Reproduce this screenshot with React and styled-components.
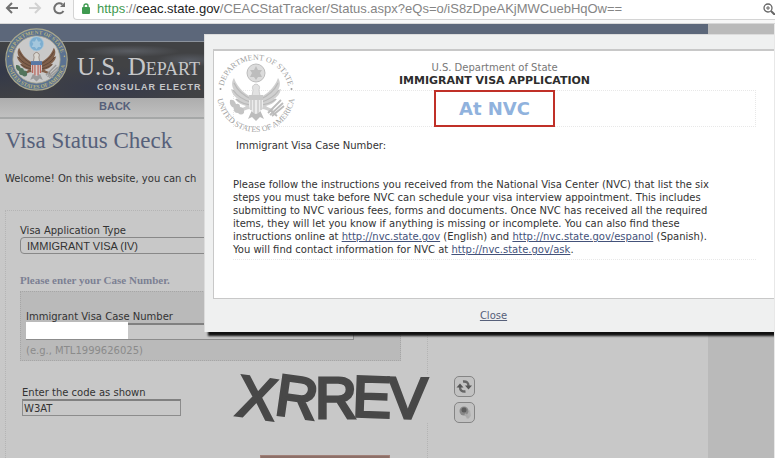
import React from "react";
import styled, { createGlobalStyle } from "styled-components";

const sans = `"DejaVu Sans", Verdana, sans-serif`;
const arial = `"Liberation Sans", Arial, sans-serif`;
const serif = `"Liberation Serif", "Times New Roman", serif`;

const GlobalStyle = createGlobalStyle`
  *, *::before, *::after { box-sizing: border-box; }
  body { margin: 0; background: #e8e8e8; font: 10px/13px ${sans}; color: #333; }
`;

const Window = styled.div`
  height: 100vh;
  overflow: hidden;
  display: flex;
  flex-direction: column;
`;

const BrowserBar = styled.div`
  flex: none;
  height: 24px;
  display: flex;
  align-items: flex-start;
  background: #f7f7f7;
  border-bottom: 1px solid #d8d8d8;
`;

const BarButton = styled.button`
  flex: none;
  width: 24px;
  height: 17px;
  padding: 0;
  border: 0;
  background: none;
  color: ${(p) => (p.$faint ? "#d2d2d2" : "#707070")};
  svg { display: block; margin: 0 auto; }
`;

const Address = styled.div`
  flex: 1;
  min-width: 0;
  height: 20px;
  margin-left: 1px;
  padding: 0 0 2px 8px;
  display: flex;
  align-items: center;
  gap: 7px;
  background: #fff;
  border: 1px solid #d4d4d4;
  border-width: 0 0 1px 1px;
  border-bottom-left-radius: 4px;
`;

const Url = styled.div`
  flex: 1;
  min-width: 0;
  overflow: hidden;
  white-space: nowrap;
  font: 13px/17px ${arial};
  color: #858585;
  outline: none;
`;
const Scheme = styled.span`color: #3f9a50;`;
const Host = styled.span`color: #222;`;

const Site = styled.div`
  flex: 1;
  min-height: 0;
  position: relative;
  overflow: hidden;
  display: flex;
  margin-right: 1px;
  background: #bababa;
`;

const Column = styled.main`
  flex: 1;
  min-width: 0;
  margin-right: 66px;
  background: #c8c8c8;
`;

const Masthead = styled.header`position: relative;`;

const TopBand = styled.div`
  height: 18px;
  background: #5c677a;
  border-bottom: 1px solid #8b929c;
`;

const Banner = styled.div`
  height: 56px;
  padding: 10px 0 0 77px;
  color: #c6c7c9;
  background:
    radial-gradient(ellipse 50px 6px at 130px 9px, #5a5d63, transparent),
    radial-gradient(ellipse 34px 7px at 190px 18px, #565a62, transparent),
    radial-gradient(ellipse 90px 22px at 110px 46px, #363a4c, transparent),
    radial-gradient(ellipse 50px 30px at 0 30px, #343949, transparent),
    #414244;
`;

const Agency = styled.div`
  font: 25px/30px ${serif};
  font-variant: small-caps;
`;

const Division = styled.div`
  padding-left: 20px;
  font: bold 9px/11px ${arial};
  letter-spacing: 1px;
`;

const EmblemSlot = styled.div`
  position: absolute;
  left: 5px;
  top: 4px;
  svg { display: block; }
`;

const NavBar = styled.nav`
  height: 21px;
  padding: 1px 0 0 99px;
  background: linear-gradient(#adadad, #c0c0c0);
  border-bottom: 2px solid #a5a7a7;
  a { font: bold 11px/14px ${arial}; color: #56607a; text-decoration: none; }
`;

const Title = styled.h1`
  margin: 8px 0 17px 5px;
  font: 23px/28px ${serif};
  color: #56607a;
`;

const Welcome = styled.p`margin: 0 0 25px 5px;`;

const FormBox = styled.form`
  width: 423px;
  height: 300px;
  margin-left: 5px;
  padding: 13px 0 0 14px;
  border: 1px dotted #b4b4b4;
`;

const Label = styled.label`display: block;`;

const TypeSelect = styled.select`
  display: block;
  width: 270px;
  height: 17px;
  padding: 0 6px;
  appearance: none;
  font: 11px/14px ${arial};
  color: #333;
  background: #c8c8c8;
  border: 1px solid #888;
  border-radius: 4px;
`;

const Hint = styled.p`
  margin: 19px 0 4px;
  font: bold 11px/14px ${serif};
  color: #7c8093;
`;

const CasePanel = styled.div`
  width: 381px;
  height: 70px;
  padding: 18px 0 0 5px;
  background: #bababa;
  border: 1px dotted #a6a6a6;
  color: #8b8b8b;
  label { color: #333; }
`;

const CaseRow = styled.div`
  position: relative;
  width: 328px;
  margin-bottom: 4px;
`;

const TextInput = styled.input`
  display: block;
  width: ${(p) => p.$width};
  height: 17px;
  padding: 0 1px;
  font: 10px/14px ${sans};
  color: #333;
  background: #c8c8c8;
  border: 1px solid #8c8c8c;
  border-top: 2px solid #808080;
  border-radius: 0;
`;

const Redaction = styled.span`
  position: absolute;
  left: 0;
  top: -1px;
  width: 102px;
  height: 17px;
  background: #fff;
`;

const CodeRow = styled.div`
  display: flex;
  align-items: flex-start;
  margin: 14px 0 32px 2px;
  > * { flex: none; }
`;

const CodeField = styled.div`
  width: 213px;
  padding-top: 11px;
`;

const Captcha = styled.div`
  margin-right: 23px;
  background: #c8c8c8;
  svg { display: block; overflow: visible; }
`;

const CaptchaTools = styled.div`
  display: flex;
  flex-direction: column;
  gap: 5px;
  padding-top: 1px;
`;

const ToolButton = styled.button`
  width: 21px;
  height: 21px;
  padding: 1px;
  background: #c2c2c2;
  border: 1px solid #858585;
  border-radius: 5px;
  svg { display: block; }
`;

const SubmitButton = styled.button`
  display: block;
  width: 130px;
  height: 20px;
  margin-left: 240px;
  background: #8d7068;
  border: 1px solid #a08078;
`;

const Dialog = styled.section`
  position: absolute;
  left: 204px;
  right: 0;
  top: 10px;
  padding: 14px 0 9px 8px;
  background: #eff0f0;
  border-left: 1px solid #dcdcdc;
  border-top: 1px solid #dcdcdc;
  box-shadow: 4px 4px 2px 0 #111;
`;

const Sheet = styled.div`
  position: relative;
  min-height: 250px;
  padding: 10px 18px 0 19px;
  background: #fff;
  border: 1px solid #c8c8c8;
  border-width: 2px 0 1px 1px;
  color: #333;
`;

const SheetSeal = styled.div`
  position: absolute;
  left: 2px;
  top: 2px;
  svg { display: block; }
`;

const Heading = styled.div`
  text-align: center;
  color: #777;
`;

const Subheading = styled.h2`
  margin: 0 0 3px;
  font: bold 11px/13px ${sans};
  text-align: center;
  color: #2d2d2d;
`;

const StatusRow = styled.div`
  display: flex;
  justify-content: center;
  margin-bottom: 12px;
  border: 1px dotted #e8e8e8;
`;

const Status = styled.strong`
  width: 121px;
  margin: -1px 0;
  padding: 5px 0 4px;
  border: 2px solid #c03028;
  font: bold 18px/24px ${sans};
  text-align: center;
  color: #90b2dd;
`;

const CaseLine = styled.p`margin: 0 0 26px 3px;`;

const Message = styled.p`
  margin: 0;
  padding-bottom: 3px;
  border-bottom: 1px dotted #e8e8e8;
  a { color: #44527a; }
`;

const CloseButton = styled.button`
  display: block;
  margin: 9px auto 0;
  padding: 0;
  border: 0;
  background: none;
  font: 10px/15px ${sans};
  color: #56607a;
  text-decoration: underline;
`;

const SEAL_COLORS = {
  color: {
    ring: "#5b7291", face: "#c9c9c9", text: "#b9b27d", wing: "#80604b", wingLine: "#5e4638",
    disc: "#7daed0", star: "#a5c7dd", leaf: "#53745c", arrow: "#9a9a9a", shieldTop: "#5878a5",
    stripe: "#b7675c", shield: "#d3cccc", head: "#d9d6d0", edge: "#a9a78c",
  },
  gray: {
    ring: "none", face: "none", text: "#9f9f9f", wing: "#d0d0d0", wingLine: "#b9b9b9",
    disc: "#dcdcdc", star: "#bdbdbd", leaf: "#c4c4c4", arrow: "#bcbcbc", shieldTop: "#c9c9c9",
    stripe: "#cccccc", shield: "#ececec", head: "#e2e2e2", edge: "none",
  },
};

function Seal({ tone, size }) {
  const c = SEAL_COLORS[tone];
  const gray = tone === "gray";
  const id = `seal-${tone}`;
  const rt = gray ? 33 : 32;
  const rb = gray ? 39 : 37;
  const wing = "M38 45 C30 42 22 36 18 25 C15 29 16 34 18 37 L15 36 C16 41 19 44 22 46 L19 46 C22 50 26 52 30 53 L28 55 C32 57 36 56 40 55 Z";
  const quills = "M18 30 Q23 41 37 47 M17 37 Q23 46 37 50 M20 46 Q27 52 38 52";
  return (
    <svg width={size} height={size} viewBox="0 0 80 80" aria-label="Department of State seal" role="img">
      <defs>
        <path id={`${id}-top`} d={`M${40 - rt} 40 A${rt} ${rt} 0 0 1 ${40 + rt} 40`} />
        <path id={`${id}-bottom`} d={`M${40 - rb} 40 A${rb} ${rb} 0 0 0 ${40 + rb} 40`} />
      </defs>
      <circle cx="40" cy="40" r="39" fill={c.ring} stroke={c.edge} strokeWidth="1.5" />
      <circle cx="40" cy="40" r="30" fill={c.face} stroke={c.edge} />
      <g fill={c.text} fontFamily="Liberation Serif, serif" fontSize={gray ? 8 : 7} fontWeight={gray ? 400 : 700} textAnchor="middle">
        <text><textPath href={`#${id}-top`} startOffset="50%">DEPARTMENT OF STATE</textPath></text>
        <text><textPath href={`#${id}-bottom`} startOffset="50%">UNITED STATES OF AMERICA</textPath></text>
      </g>
      <circle cx="4.5" cy="36" r="1" fill={c.text} />
      <circle cx="75.5" cy="36" r="1" fill={c.text} />
      <circle cx="40" cy="20" r="9" fill={c.disc} stroke={c.star} strokeWidth="1" />
      <path d="M40 13 L42 17 L46 17 L44 20 L46 24 L42 24 L40 27 L38 24 L34 24 L36 20 L34 17 L38 17 Z" fill={c.star} />
      <path d={wing} fill={c.wing} />
      <path d={wing} fill={c.wing} transform="matrix(-1 0 0 1 80 0)" />
      <g fill="none" stroke={c.wingLine} strokeWidth="1.2">
        <path d={quills} />
        <path d={quills} transform="matrix(-1 0 0 1 80 0)" />
      </g>
      <path d="M36 57 L44 57 L48 66 L44 64 L40 68 L36 64 L32 66 Z" fill={c.arrow} />
      <path d="M33 54 L23 58 M47 54 L57 58" stroke={c.wing} strokeWidth="3" />
      <path d="M14 47 Q18 46 20 51 Q24 50 24 54 Q29 54 28 60 Q25 63 22 60 Q17 60 18 55 Q13 53 14 47 Z" fill={c.leaf} />
      <path d="M52 60 L65 47 M54 62 L67 50 M56 63 L68 53 M54 57 L61 63" stroke={c.arrow} strokeWidth="1.8" />
      <path d="M37 37 Q35 32 40 31 Q45 32 43 37 L44 43 H36 Z" fill={c.head} stroke={c.wingLine} strokeWidth=".6" />
      <path d="M33 42 H47 V53 Q46 59 40 61 Q34 59 33 53 Z" fill={c.shield} />
      <path d="M33 42 H47 V47 H33 Z" fill={c.shieldTop} />
      <path d="M35 47 V57 M38 47 V60 M42 47 V60 M45 47 V57" stroke={c.stripe} strokeWidth="1.6" />
    </svg>
  );
}

const CAPTCHA_LETTERS = [
  { ch: "X", x: 22, y: 43, turn: 8 },
  { ch: "R", x: 62, y: 42, turn: 8 },
  { ch: "R", x: 101, y: 43, turn: 0 },
  { ch: "E", x: 137, y: 42, turn: 2 },
  { ch: "V", x: 173, y: 43, turn: 1 },
];

export default function App() {
  return (
    <Window>
      <GlobalStyle />
      <BrowserBar>
        <BarButton aria-label="Back">
          <svg width="16" height="17" viewBox="0 0 16 17" fill="none" stroke="currentColor" strokeWidth="2"><path d="M14 8H3M8 3L3 8l5 5" /></svg>
        </BarButton>
        <BarButton aria-label="Forward" $faint>
          <svg width="16" height="17" viewBox="0 0 16 17" fill="none" stroke="currentColor" strokeWidth="2"><path d="M1 8h11M7 3l5 5-5 5" /></svg>
        </BarButton>
        <BarButton aria-label="Reload">
          <svg width="16" height="17" viewBox="0 0 16 17" fill="none" stroke="currentColor" strokeWidth="2">
            <path d="M11.500 11A5 5 0 1 1 10.500 4.500" />
            <path d="M13 2v5H8z" fill="currentColor" stroke="none" />
          </svg>
        </BarButton>
        <Address>
          <svg width="8" height="11" viewBox="0 0 8 11" aria-hidden="true">
            <path d="M2 5V3a2 2 0 0 1 4 0v2" fill="none" stroke="#3f9a50" strokeWidth="1.4" />
            <rect y="4" width="8" height="7" rx="1" fill="#3f9a50" />
          </svg>
          <Url role="textbox" aria-label="Address" contentEditable suppressContentEditableWarning spellCheck={false}>
            <Scheme>https</Scheme>://<Host>ceac.state.gov</Host>/CEACStatTracker/Status.aspx?eQs=o/iS8zDpeAKjMWCuebHqOw==
          </Url>
          <svg width="12" height="13" viewBox="0 0 12 13" fill="none" stroke="#666" aria-hidden="true">
            <circle cx="5" cy="6" r="4" strokeWidth="1.3" />
            <path d="M3 6h4M5 4v4" />
            <path d="M8 9l4 4" strokeWidth="2" />
          </svg>
        </Address>
      </BrowserBar>

      <Site>
        <Column>
          <Masthead>
            <TopBand />
            <Banner>
              <Agency>U.S. Depart</Agency>
              <Division>CONSULAR ELECTR</Division>
            </Banner>
            <EmblemSlot><Seal tone="color" size={63} /></EmblemSlot>
          </Masthead>
          <NavBar><a href="#back">BACK</a></NavBar>
          <Title>Visa Status Check</Title>
          <Welcome>Welcome! On this website, you can ch</Welcome>
          <FormBox onSubmit={(e) => e.preventDefault()}>
            <Label htmlFor="visa-type">Visa Application Type</Label>
            <TypeSelect id="visa-type"><option>IMMIGRANT VISA (IV)</option></TypeSelect>
            <Hint>Please enter your Case Number.</Hint>
            <CasePanel>
              <Label htmlFor="case-number">Immigrant Visa Case Number</Label>
              <CaseRow>
                <TextInput id="case-number" $width="100%" />
                <Redaction />
              </CaseRow>
              (e.g., MTL1999626025)
            </CasePanel>
            <CodeRow>
              <CodeField>
                <Label htmlFor="code">Enter the code as shown</Label>
                <TextInput id="code" $width="159px" defaultValue="W3AT" />
              </CodeField>
              <Captcha>
                <svg width="196" height="48" viewBox="0 0 196 48" role="img" aria-label="Verification code">
                  <g fontFamily="Liberation Sans, Arial, sans-serif" fontSize="58" textAnchor="middle" fill="#484848" stroke="#484848" strokeWidth="3">
                    {CAPTCHA_LETTERS.map((l, i) => (
                      <text key={i} x={l.x} y={l.y} transform={`rotate(${l.turn} ${l.x} 22)`}>{l.ch}</text>
                    ))}
                  </g>
                </svg>
              </Captcha>
              <CaptchaTools>
                <ToolButton type="button" aria-label="New code">
                  <svg width="17" height="17" viewBox="0 0 17 17">
                    <path d="M7 3.5Q12.500 3 12.500 8M9.500 13.500Q4 14 4 9" fill="none" stroke="#666" strokeWidth="2.400" />
                    <path d="M9 7.500h7l-3.500 4zM.5 9.500h7L4 5.500z" fill="#555" />
                  </svg>
                </ToolButton>
                <ToolButton type="button" aria-label="Listen to code">
                  <svg width="17" height="17" viewBox="0 0 17 17">
                    <path d="M8 9l6-3 1 6-4 3z" fill="#b0b0b0" />
                    <circle cx="8" cy="7" r="4.500" fill="#888" />
                    <circle cx="8" cy="6" r="2.500" fill="#5c5c5c" />
                    <path d="M9 10l4 4" stroke="#aaa" strokeWidth="2" />
                  </svg>
                </ToolButton>
              </CaptchaTools>
            </CodeRow>
            <SubmitButton type="submit" aria-label="Submit" />
          </FormBox>
        </Column>

        <Dialog role="dialog" aria-label="Visa status">
          <Sheet>
            <SheetSeal><Seal tone="gray" size={80} /></SheetSeal>
            <Heading>U.S. Department of State</Heading>
            <Subheading>IMMIGRANT VISA APPLICATION</Subheading>
            <StatusRow><Status>At NVC</Status></StatusRow>
            <CaseLine>Immigrant Visa Case Number:</CaseLine>
            <Message>
              Please follow the instructions you received from the National Visa Center (NVC) that list the six<br />
              steps you must take before NVC can schedule your visa interview appointment. This includes<br />
              submitting to NVC various fees, forms and documents. Once NVC has received all the required<br />
              items, they will let you know if anything is missing or incomplete. You can also find these<br />
              instructions online at <a href="http://nvc.state.gov">http://nvc.state.gov</a> (English)
              and <a href="http://nvc.state.gov/espanol">http://nvc.state.gov/espanol</a> (Spanish).<br />
              You will find contact information for NVC at <a href="http://nvc.state.gov/ask">http://nvc.state.gov/ask</a>.
            </Message>
          </Sheet>
          <CloseButton type="button">Close</CloseButton>
        </Dialog>
      </Site>
    </Window>
  );
}
